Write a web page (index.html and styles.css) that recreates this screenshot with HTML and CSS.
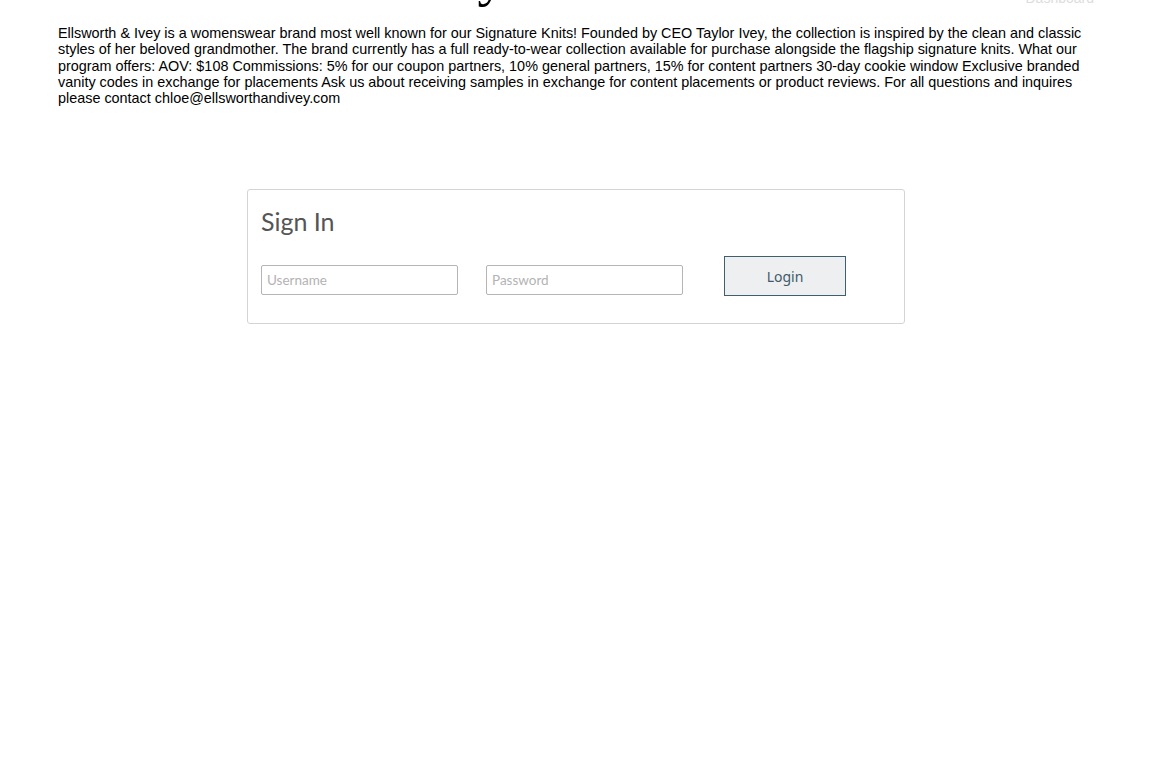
FILE: index.html
```
<!DOCTYPE html>
<html>
<head>
<meta charset="utf-8">
<link rel="stylesheet" href="styles.css">
</head>
<body>
<header class="top">
  <div class="brand">Ellsworth &amp; Ivey</div>
  <div class="topnav">Dashboard</div>
</header>
<main class="content">
  <p class="intro">Ellsworth &amp; Ivey is a womenswear brand most well known for our Signature Knits! Founded by CEO Taylor Ivey, the collection is inspired by the clean and classic styles of her beloved grandmother. The brand currently has a full ready-to-wear collection available for purchase alongside the flagship signature knits. What our program offers: AOV: $108 Commissions: 5% for our coupon partners, 10% general partners, 15% for content partners 30-day cookie window Exclusive branded vanity codes in exchange for placements Ask us about receiving samples in exchange for content placements or product reviews. For all questions and inquires please contact chloe@ellsworthandivey.com</p>
  <section class="card">
    <h2 class="card-title">Sign In</h2>
    <form class="login-row">
      <input class="field" type="text" placeholder="Username">
      <input class="field" type="password" placeholder="Password">
      <button class="btn" type="button">Login</button>
    </form>
  </section>
</main>
</body>
</html>
```
FILE: styles.css
```
html, body {
  margin: 0;
  padding: 0;
  background: #fff;
}
body {
  font-family: "Liberation Sans", Arial, sans-serif;
  color: #000;
}
.top {
  position: relative;
  height: 20px;
  overflow: hidden;
}
.brand {
  position: absolute;
  left: 0;
  right: 0;
  top: -54px;
  text-align: center;
  font-family: "Liberation Serif", serif;
  font-size: 56px;
  line-height: 60px;
  color: #000;
  padding-right: 530px;
}
.topnav {
  position: absolute;
  right: 58px;
  top: -10px;
  font-size: 14px;
  color: #ddd;
}
.content {
  padding: 0 58px;
}
.intro {
  margin: 5px 0 0;
  font-size: 14.4px;
  line-height: 16.3px;
  color: #000;
}
.card {
  width: 630px;
  margin: 83px auto 0;
  border: 1px solid #d4d4d4;
  border-radius: 3px;
  padding: 14px 13px 26px;
  height: 93px;
}
.card-title {
  margin: 0;
  font-family: "Lato", sans-serif;
  font-weight: 400;
  font-size: 25px;
  line-height: 34px;
  color: #555;
}
.login-row {
  display: flex;
  align-items: flex-end;
  margin-top: 18px;
}
.field {
  width: 197px;
  height: 30px;
  box-sizing: border-box;
  border: 1px solid #b5b5b5;
  border-radius: 2px;
  padding: 0 5px;
  font-family: "Lato", sans-serif;
  font-size: 13.5px;
  margin: 0 28px 1px 0;
  outline: none;
}
.field::placeholder {
  color: #b3b3b3;
}
.btn {
  margin-left: 13px;
  width: 122px;
  height: 40px;
  background: #eeeff0;
  border: 1px solid #3f5f6d;
  border-radius: 0;
  font-family: "Noto Sans", sans-serif;
  font-size: 14px;
  color: #3d5b6a;
}
```
